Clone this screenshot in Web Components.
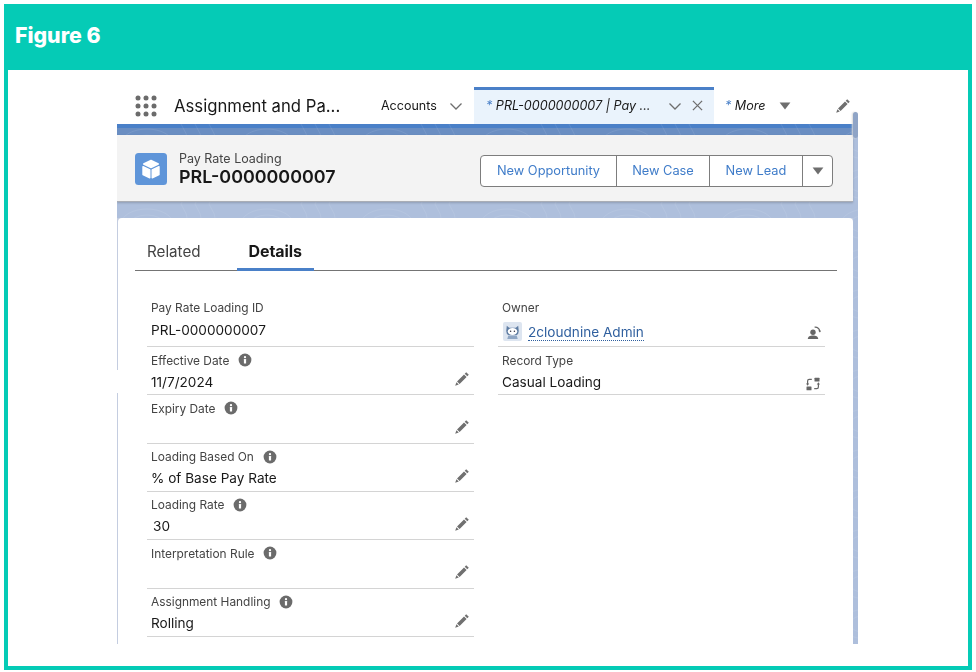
<!DOCTYPE html>
<html lang="en"><head><meta charset="utf-8"><title>Figure 6</title>
<style>
html,body{margin:0;padding:0;background:#fff}
body{font-family:Inter,"Liberation Sans",sans-serif;color:#181818}
</style></head><body>
<fig-frame>
  <span slot="title">Figure 6</span>
  <sf-screen>
    <sf-nav slot="nav"></sf-nav>
    <sf-highlights slot="highlights" kind="Pay Rate Loading" name="PRL-0000000007"></sf-highlights>
    <sf-tabs slot="tabs"></sf-tabs>
    <sf-field slot="left" first label="Pay Rate Loading ID" value="PRL-0000000007"></sf-field>
    <sf-field slot="left" label="Effective Date" value="11/7/2024" info edit></sf-field>
    <sf-field slot="left" label="Expiry Date" info edit></sf-field>
    <sf-field slot="left" label="Loading Based On" value="% of Base Pay Rate" info edit style="--vx:-1px"></sf-field>
    <sf-field slot="left" label="Loading Rate" value="30" info edit style="--vx:2px"></sf-field>
    <sf-field slot="left" label="Interpretation Rule" info edit></sf-field>
    <sf-field slot="left" label="Assignment Handling" value="Rolling" info edit style="--vx:-1px"></sf-field>
    <sf-field slot="right" first label="Owner" owner="2cloudnine Admin" action="owner"></sf-field>
    <sf-field slot="right" label="Record Type" value="Casual Loading" action="type"></sf-field>
  </sf-screen>
</fig-frame>
<script>
const ICON={
 pencil:'<svg viewBox="0 0 16 16" width="100%" height="100%"><path fill="#707070" d="M12.2 1.2l2.6 2.6-1.5 1.5-2.6-2.6zM10 3.4L12.6 6l-7 7L3 10.4zM2.4 11.2l2.4 2.4-3.6 1.2z"/></svg>',
 info:'<svg viewBox="0 0 14 14" width="14" height="14"><circle cx="7" cy="7" r="6.4" fill="#6b6b6b"/><rect x="5.9" y="6" width="2.2" height="4.6" rx=".4" fill="#fff"/><circle cx="7" cy="4.2" r="1.15" fill="#fff"/></svg>',
 chev:'<svg viewBox="0 0 14 14" width="14" height="14"><path d="M1.5 4.5L7 10l5.500-5.500" fill="none" stroke="#6e6e6e" stroke-width="1.300"/></svg>',
 close:'<svg viewBox="0 0 12 12" width="11" height="11"><path d="M1 1l10 10M11 1L1 11" fill="none" stroke="#6e6e6e" stroke-width="1.400"/></svg>',
 tri:'<svg viewBox="0 0 12 8" width="12" height="8"><path d="M.6.6h10.800L6 7.400z" fill="#6e6e6e"/></svg>',
 waffle:'<svg viewBox="0 0 22 22" width="22" height="22" fill="#6b6b6b">'+[3,11,19].map(y=>[3,11,19].map(x=>`<circle cx="${x}" cy="${y}" r="2.500"/>`).join('')).join('')+'</svg>',
 cube:'<svg viewBox="0 0 32 32" width="32" height="32"><rect width="32" height="32" rx="3.500" fill="#5f95d9"/><g fill="#fff" stroke="#fff" stroke-width="1.400" stroke-linejoin="round"><path d="M16 7.500l7.300 3.500-7.300 3.600L8.700 11z"/><path d="M8 13.600l6.800 3.300v7.900L8 21.500z"/><path d="M24 13.600l-6.800 3.300v7.900l6.800-3.300z"/></g></svg>',
 owner:'<svg viewBox="0 0 14 14" width="14" height="14" fill="#666"><circle cx="6" cy="6.200" r="2.700"/><path d="M.8 13c0-2.600 2.300-3.600 5.200-3.600s5.200 1 5.200 3.600z"/><path d="M7.600 1.100a5 5 0 0 1 5.200 4" fill="none" stroke="#666" stroke-width="1.200"/><path d="M11.200 4.600l3 .1-1.300 1.900z"/></svg>',
 type:'<svg viewBox="0 0 14 14" width="14" height="14" fill="#666"><rect x="8.500" y=".8" width="5" height="3.600" rx=".5"/><rect x=".5" y="9.600" width="5" height="3.600" rx=".5"/><path d="M5.800 2.300H3.200Q1.600 2.300 1.600 4v3" fill="none" stroke="#666" stroke-width="1.200"/><path d="M8.200 11.700h2.600q1.600 0 1.600-1.700V7" fill="none" stroke="#666" stroke-width="1.200"/><path d="M0 6.500h3.200L1.600 8.800zM10.800 7.500h3.200L12.400 5.200z"/></svg>',
 avatar:'<svg viewBox="0 0 20 20" width="19" height="19"><rect width="20" height="20" rx="2" fill="#dde5f0"/><path d="M4 4l2.500 2h7L16 4l.6 5.500q0 3.500-2.600 4.500h-8Q3.400 13 3.400 9.500z" fill="#5f7da3"/><ellipse cx="10" cy="10" rx="5" ry="3.600" fill="#fff"/><circle cx="8" cy="9.800" r=".8" fill="#334"/><circle cx="12" cy="9.800" r=".8" fill="#334"/><path d="M5.500 14.500h9l1 3.500h-11z" fill="#8fa6c4"/></svg>'
};
const TEX=`url("data:image/svg+xml,%3Csvg xmlns='http://www.w3.org/2000/svg' width='120' height='40'%3E%3Cg fill='none' stroke='%23ffffff' stroke-opacity='.08'%3E%3Cellipse cx='30' cy='20' rx='26' ry='15'/%3E%3Cellipse cx='30' cy='20' rx='17' ry='9'/%3E%3Cpath d='M64 0q14 20 0 40M78 0q14 20 0 40M92 0q14 20 0 40'/%3E%3C/g%3E%3C/svg%3E")`;
function def(name,css,html){
  customElements.define(name,class extends HTMLElement{
    connectedCallback(){
      if(this.shadowRoot)return;
      const r=this.attachShadow({mode:'open'});
      r.innerHTML='<style>'+css+'</style>'+(typeof html==='function'?html(this):html);
    }
  });
}
def('fig-frame',`
:host{display:flex;flex-direction:column;box-sizing:border-box;width:968px;height:666px;margin:4px 0 0 4px;border:4px solid #05cbb6;border-top:0;background:#fff;overflow:hidden}
header{flex:none;height:66px;margin:0 -4px;background:#05cbb6;color:#fff;font:800 21.300px/62px Inter,"Liberation Sans",sans-serif;padding-left:11px}
.body{flex:none;padding:17px 0 0 109px}
`,`<header><slot name="title"></slot></header><div class="body"><slot></slot></div>`);
def('sf-screen',`
:host{display:block;width:741px;height:557px;overflow:hidden;filter:blur(.3px);font-family:Inter,"Liberation Sans",sans-serif;color:#181818}
.page{height:520px;background-color:#aebfdc;background-image:${TEX},linear-gradient(#4a80c8 0 4px,#6a8ec2 4px 11px,#aebfdc 11px);padding-top:11px;box-sizing:border-box;position:relative}
.main{margin-right:5px}
.strip{margin-top:16px;padding-left:1px;height:426px;background:linear-gradient(#c4cde0 0 152px,#fff 152px 175px,#c4cde0 175px)}
.card{background:#fff;border-radius:4px 4px 0 0;height:100%;padding:0 16px 0 17px;box-sizing:border-box}
.cols{display:grid;grid-template-columns:327px 327px;column-gap:24px;margin:0 0 0 12px}
.col{display:flex;flex-direction:column}
.thumb{position:absolute;right:0;top:-12px;width:5px;height:26px;background:#8fa4c6;border-radius:3px;box-shadow:-1px 0 2px #d8d8d8}
`,`<slot name="nav"></slot><div class="page"><div class="thumb"></div><div class="main"><slot name="highlights"></slot>
<div class="strip"><div class="card"><slot name="tabs"></slot><div class="cols"><div class="col"><slot name="left"></slot></div><div class="col"><slot name="right"></slot></div></div></div></div></div></div>`);
def('sf-nav',`
:host{display:flex;align-items:center;height:37px;background:#fff;color:#181818}
.w{margin-left:18px;display:flex}
.app{margin-left:17px;width:176px;font-size:16.700px;white-space:nowrap}
.acc{margin-left:31px;font-size:12.500px;width:68px;white-space:nowrap}
.c1{display:flex;width:25px}
.tab{align-self:stretch;margin-left:0;width:240px;box-sizing:border-box;background:#eaf3fc;border-top:3px solid #4a80c8;display:flex;align-items:center;padding-left:12px;font-style:italic;font-size:12.600px;white-space:nowrap}
.tab b,.more b{color:#4a80c8;font-weight:400}
.tt{width:182px;margin-top:-3px}
.c2{display:flex;margin-right:10px;margin-top:-3px}
.cl{display:flex;margin-top:-3px}
.more{margin-left:11px;font-style:italic;font-size:12.600px;width:54px;white-space:nowrap}
.t{display:flex}
.p{width:16px;height:16px;margin-left:44px}
`,`<span class="w">${ICON.waffle}</span><span class="app">Assignment and Pa...</span><span class="acc">Accounts</span><span class="c1">${ICON.chev}</span>
<div class="tab"><span class="tt"><b>*</b> PRL-0000000007 | Pay ...</span><span class="c2">${ICON.chev}</span><span class="cl">${ICON.close}</span></div>
<span class="more"><b>*</b> More</span><span class="t">${ICON.tri}</span><span class="p">${ICON.pencil}</span>`);
def('sf-highlights',`
:host{display:flex;align-items:center;height:67px;box-sizing:border-box;background-color:#f3f3f3;border-bottom:1px solid #a9adb5;box-shadow:0 1px 2px rgba(0,0,0,.18);padding:1px 20px 0 18px}
.ic{display:flex;margin-right:12px}
.tx{flex:1;display:flex;flex-direction:column}
.k{font-size:12.500px;line-height:15px;color:#444}
.n{font-size:17.900px;line-height:21px;font-weight:600;color:#181818}
.bg{display:flex;height:32px;margin-top:4px;box-sizing:border-box;border:1px solid #7d7d7d;border-radius:4px;background:#fff}
.b{display:flex;align-items:center;justify-content:center;color:#3f7cc9;font-size:12.800px;border-right:1px solid #7d7d7d;box-sizing:border-box}
.b:last-child{border-right:0}
`,h=>`<span class="ic">${ICON.cube}</span><div class="tx"><span class="k">${h.getAttribute('kind')}</span><span class="n">${h.getAttribute('name')}</span></div>
<div class="bg"><span class="b" style="width:136px">New Opportunity</span><span class="b" style="width:93px">New Case</span><span class="b" style="width:93px">New Lead</span><span class="b" style="width:29px">${ICON.tri}</span></div>`);
def('sf-tabs',`
:host{display:flex;height:53px;box-sizing:border-box;padding-top:14px;margin-bottom:23px;border-bottom:1px solid #747474;font-size:15.200px;align-items:stretch}
.t{padding:0 12px;line-height:39px;height:39px;box-sizing:border-box;color:#444}
.a{margin-left:24px;color:#181818;font-weight:700;border-bottom:3px solid #4a80c8;padding:0 12px;font-size:16px;line-height:38px;letter-spacing:-.1px;width:77px;white-space:nowrap}
`,`<span class="t">Related</span><span class="t a">Details</span>`);
def('sf-field',`
:host{display:flex;flex-direction:column;box-sizing:border-box;height:48.330px;border-bottom:1px solid #d4d4d4;padding:4px 4px 0}
:host([first]){height:53px;padding-top:4px}
.l{display:flex;align-items:center;height:18px;font-size:11.900px;color:#444;white-space:nowrap}
.i{display:flex;margin-left:9px}
.v{display:flex;align-items:center;justify-content:space-between;height:24px;margin-top:.5px;font-size:13.600px;color:#181818}
:host([first]) .v{margin-top:2px}
.x{padding-left:var(--vx,0)}
.e{width:16px;height:16px;margin-right:0;margin-top:-5px;flex:none}
.o{display:flex;align-items:center;gap:6px;margin-left:1px;margin-top:2px}
.o a{color:#2f5f9e;border-bottom:1px dotted #2f5f9e;line-height:15px;margin-top:4px}
.o svg{display:block}
.act{display:flex;margin-right:1px}
:host([action=type]) .act{margin-top:5px}
:host([action=owner]) .act{margin-right:0;margin-top:5px}
`,h=>{
 const a=n=>h.getAttribute(n);
 const val=a('owner')?`<span class="o">${ICON.avatar}<a>${a('owner')}</a></span>`:`<span class="x">${a('value')||''}</span>`;
 const right=h.hasAttribute('edit')?`<span class="e">${ICON.pencil}</span>`:a('action')?`<span class="act">${ICON[a('action')]}</span>`:'';
 return `<div class="l">${a('label')}${h.hasAttribute('info')?`<span class="i">${ICON.info}</span>`:''}</div><div class="v">${val}${right}</div>`;
});
</script>
</body></html>
